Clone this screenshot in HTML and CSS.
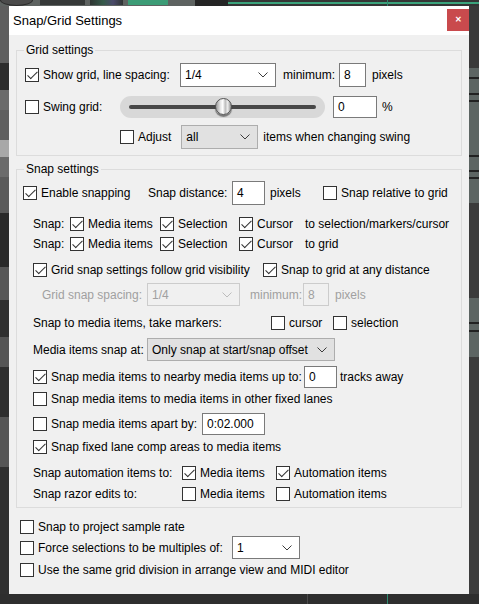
FILE: index.html
```html
<!DOCTYPE html>
<html>
<head>
<meta charset="utf-8">
<title>Snap/Grid Settings</title>
<link rel="stylesheet" href="styles.css">
</head>
<body>
<div class="desk">
  <div class="topbar">
    <span class="tb-left"><span class="knob"></span><span class="tbtn b1"></span><span class="tbtn b2"></span><span class="tbtn b3"></span></span>
    <span class="tb-dark"></span>
    <span class="tb-track"></span>
  </div>

  <div class="side left"></div>

  <div class="dialog">
    <div class="titlebar">
      <span class="title">Snap/Grid Settings</span>
      <span class="close">&#x2715;</span>
    </div>

    <div class="content">
      <fieldset class="group grid-group">
        <legend>Grid settings</legend>

        <div class="row h24 mt6 pl8">
          <label class="chk w155"><span class="cb on"></span>Show grid, line spacing:</label>
          <div class="combo w96 h24"><span>1/4</span><svg class="chev" viewBox="0 0 10 6"><path d="M0.5 0.5 L5 5 L9.5 0.5"/></svg></div>
          <span class="ml7">minimum:</span>
          <div class="edit w27 h24 ml4">8</div>
          <span class="ml6">pixels</span>
        </div>

        <div class="row h22 mt9 pl8">
          <label class="chk w95"><span class="cb"></span>Swing grid:</label>
          <div class="slider">
            <span class="groove"></span>
            <span class="thumb"></span>
          </div>
          <div class="edit w44 h22 ml8">0</div>
          <span class="ml5">%</span>
        </div>

        <div class="row h24 mt7 pl103">
          <label class="chk"><span class="cb"></span>Adjust</label>
          <div class="combo gray w77 h24 ml10"><span>all</span><svg class="chev" viewBox="0 0 10 6"><path d="M0.5 0.5 L5 5 L9.5 0.5"/></svg></div>
          <span class="ml5">items when changing swing</span>
        </div>
      </fieldset>

      <fieldset class="group snap-group">
        <legend>Snap settings</legend>

        <div class="row h24 mt5 pl6">
          <label class="chk w125"><span class="cb on"></span>Enable snapping</label>
          <span class="w84">Snap distance:</span>
          <div class="edit w33 h24">4</div>
          <span class="w53 ml5">pixels</span>
          <label class="chk"><span class="cb"></span>Snap relative to grid</label>
        </div>

        <div class="row h20 mt9 pl16">
          <span class="w37">Snap:</span>
          <label class="chk w90"><span class="cb on"></span>Media items</label>
          <label class="chk w79"><span class="cb on"></span>Selection</label>
          <label class="chk w66"><span class="cb on"></span>Cursor</label>
          <span>to selection/markers/cursor</span>
        </div>

        <div class="row h20 pl16">
          <span class="w37">Snap:</span>
          <label class="chk w90"><span class="cb on"></span>Media items</label>
          <label class="chk w79"><span class="cb on"></span>Selection</label>
          <label class="chk w66"><span class="cb on"></span>Cursor</label>
          <span>to grid</span>
        </div>

        <div class="row h20 mt6 pl16">
          <label class="chk w230"><span class="cb on"></span>Grid snap settings follow grid visibility</label>
          <label class="chk"><span class="cb on"></span>Snap to grid at any distance</label>
        </div>

        <div class="row h23 mt3 pl25 disabled">
          <span class="w105">Grid snap spacing:</span>
          <div class="combo dis w93 h23"><span class="dis-val">1/4</span><svg class="chev" viewBox="0 0 10 6"><path d="M0.5 0.5 L5 5 L9.5 0.5"/></svg></div>
          <span class="w53 ml10">minimum:</span>
          <div class="edit dis w26 h23">8</div>
          <span class="ml6">pixels</span>
        </div>

        <div class="row h20 mt7 pl16">
          <span class="w238">Snap to media items, take markers:</span>
          <label class="chk w62"><span class="cb"></span>cursor</label>
          <label class="chk"><span class="cb"></span>selection</label>
        </div>

        <div class="row h23 mt5 pl16">
          <span class="w114">Media items snap at:</span>
          <div class="combo gray w188 h23"><span>Only snap at start/snap offset</span><svg class="chev" viewBox="0 0 10 6"><path d="M0.5 0.5 L5 5 L9.5 0.5"/></svg></div>
        </div>

        <div class="row h22 mt5 pl16">
          <label class="chk w271"><span class="cb on"></span>Snap media items to nearby media items up to:</label>
          <div class="edit w33 h22">0</div>
          <span class="ml3">tracks away</span>
        </div>

        <div class="row h20 mt1 pl16">
          <label class="chk"><span class="cb"></span>Snap media items to media items in other fixed lanes</label>
        </div>

        <div class="row h22 mt4 pl16">
          <label class="chk w169"><span class="cb"></span>Snap media items apart by:</label>
          <div class="edit w63 h22">0:02.000</div>
        </div>

        <div class="row h20 mt2 pl16">
          <label class="chk"><span class="cb on"></span>Snap fixed lane comp areas to media items</label>
        </div>

        <div class="row h20 mt6 pl16">
          <span class="w149">Snap automation items to:</span>
          <label class="chk w94"><span class="cb on"></span>Media items</label>
          <label class="chk"><span class="cb on"></span>Automation items</label>
        </div>

        <div class="row h20 mt1 pl16">
          <span class="w149">Snap razor edits to:</span>
          <label class="chk w94"><span class="cb"></span>Media items</label>
          <label class="chk"><span class="cb"></span>Automation items</label>
        </div>
      </fieldset>

      <div class="row h19 mt9 pl4">
        <label class="chk"><span class="cb"></span>Snap to project sample rate</label>
      </div>
      <div class="row h23 pl4">
        <label class="chk w212"><span class="cb"></span>Force selections to be multiples of:</label>
        <div class="combo w68 h23"><span>1</span><svg class="chev" viewBox="0 0 10 6"><path d="M0.5 0.5 L5 5 L9.5 0.5"/></svg></div>
      </div>
      <div class="row h20 mt1 pl4">
        <label class="chk"><span class="cb"></span>Use the same grid division in arrange view and MIDI editor</label>
      </div>
    </div>
  </div>

  <div class="side right"></div>

  <div class="bottombar"></div>
</div>
</body>
</html>
```

FILE: styles.css
```css
* {
  box-sizing: border-box;
}

html,
body {
  margin: 0;
  padding: 0;
}

body {
  width: 479px;
  height: 604px;
  overflow: hidden;
  background: #333333;
  font-family: "Liberation Sans", Arial, sans-serif;
  font-size: 12px;
  line-height: 14px;
  color: #000000;
}

/* ---------- backdrop (host application) ---------- */
.desk {
  display: grid;
  grid-template-columns: 9px 460px 10px;
  grid-template-rows: 6px 588px 10px;
  width: 479px;
  height: 604px;
}

.topbar {
  grid-column: 1 / 4;
  display: flex;
  height: 6px;
  overflow: hidden;
}

.tb-left {
  display: flex;
  width: 195px;
  background: #5e6361;
}

.knob {
  width: 33px;
  height: 12px;
  margin-top: -6px;
  border-radius: 50%;
  background: #4b4b4b;
  border: 1px solid #2a2a2a;
}

.tbtn {
  height: 5px;
  margin-left: 7px;
  background: #363938;
}

.tbtn.b1 {
  width: 45px;
}

.tbtn.b2 {
  width: 33px;
  margin-left: 5px;
  background: linear-gradient(90deg, #2f3432 0%, #355a4a 40%, #4a4a6a 70%, #2f3432 100%);
}

.tbtn.b3 {
  width: 40px;
  margin-left: 5px;
  background: #3c9c76;
}

.tb-dark {
  width: 33px;
  background: #252525;
}

.tb-track {
  flex: 1;
  background:
    linear-gradient(90deg, transparent 159px, #2f8a70 159px, #2f8a70 160px, transparent 160px),
    linear-gradient(180deg, #353535 0, #353535 2px, #3ba37c 2px, #3ba37c 4px, #353535 4px);
}

.side.left {
  background: linear-gradient(180deg,
    #5e5e5e 0, #5e5e5e 57px,
    #2c2c2c 57px, #2c2c2c 84px,
    #6b6b6b 84px, #6b6b6b 104px,
    #5f5f5f 104px, #5f5f5f 134px,
    #a8a8a8 134px, #a8a8a8 151px,
    #6b6b6b 151px, #6b6b6b 171px,
    #5a5a5a 171px, #5a5a5a 207px,
    #2a2a2a 207px, #2a2a2a 261px,
    #575757 261px, #575757 294px,
    #303030 294px, #303030 331px,
    #555555 331px, #555555 361px,
    #2e2e2e 361px, #2e2e2e 411px,
    #565656 411px, #565656 461px,
    #303030 461px);
}

.side.right {
  background: linear-gradient(180deg,
    #3a3a3a 0, #3a3a3a 62px,
    #5d6563 62px, #5d6563 71px,
    #222222 71px, #222222 73px,
    #5d6563 73px, #5d6563 87px,
    #222222 87px, #222222 89px,
    #5d6563 89px, #5d6563 94px,
    #222222 94px, #222222 96px,
    #5d6563 96px, #5d6563 149px,
    #222222 149px, #222222 151px,
    #5d6563 151px, #5d6563 164px,
    #222222 164px, #222222 166px,
    #5d6563 166px, #5d6563 171px,
    #222222 171px, #222222 173px,
    #5d6563 173px, #5d6563 197px,
    #3b3b3b 197px, #3b3b3b 292px,
    #5d6563 292px, #5d6563 316px,
    #222222 316px, #222222 318px,
    #5d6563 318px, #5d6563 324px,
    #222222 324px, #222222 326px,
    #5d6563 326px, #5d6563 351px,
    #3c3c3c 351px);
}

.bottombar {
  grid-column: 1 / 4;
  background:
    linear-gradient(90deg, transparent 307px, #4a4a4a 307px, #4a4a4a 308px, transparent 308px,
      transparent 387px, #2f8a70 387px, #2f8a70 388px, transparent 388px),
    #2e2e2e;
}

/* ---------- dialog window ---------- */
.dialog {
  display: flex;
  flex-direction: column;
  background: #f0f0f0;
}

.titlebar {
  display: flex;
  align-items: flex-start;
  height: 29px;
  background: #ffffff;
}

.title {
  padding-left: 4px;
  font-size: 13px;
  line-height: 29px;
}

.close {
  display: flex;
  align-items: center;
  justify-content: center;
  width: 22px;
  height: 22px;
  margin-top: 3px;
  margin-left: auto;
  background: #c94a4d;
  color: #ffffff;
  font-size: 8px;
  font-weight: bold;
}

.content {
  display: flex;
  flex-direction: column;
  padding: 0 7px;
}

.group {
  margin: 8px 0 0;
  padding: 0 0 6px;
  border: 1px solid #dcdcdc;
  min-width: 0;
}

.group legend {
  margin-left: 7px;
  padding: 0 2px;
  line-height: 14px;
}

.snap-group {
  margin-top: 6px;
  padding-bottom: 3px;
}

/* ---------- rows ---------- */
.row {
  display: flex;
  align-items: center;
  white-space: nowrap;
}

.h19 { height: 19px; }
.h20 { height: 20px; }
.h22 { height: 22px; }
.h23 { height: 23px; }
.h24 { height: 24px; }

.mt1 { margin-top: 1px; }
.mt2 { margin-top: 2px; }
.mt3 { margin-top: 3px; }
.mt4 { margin-top: 4px; }
.mt5 { margin-top: 5px; }
.mt6 { margin-top: 6px; }
.mt7 { margin-top: 7px; }
.mt9 { margin-top: 9px; }

.pl4 { padding-left: 4px; }
.pl6 { padding-left: 6px; }
.pl8 { padding-left: 8px; }
.pl16 { padding-left: 16px; }
.pl25 { padding-left: 25px; }
.pl103 { padding-left: 103px; }

.ml3 { margin-left: 3px; }
.ml4 { margin-left: 4px; }
.ml5 { margin-left: 5px; }
.ml6 { margin-left: 6px; }
.ml7 { margin-left: 7px; }
.ml8 { margin-left: 8px; }
.ml10 { margin-left: 10px; }

.w26 { width: 26px; }
.w27 { width: 27px; }
.w33 { width: 33px; }
.w37 { width: 37px; }
.w44 { width: 44px; }
.w53 { width: 53px; }
.w62 { width: 62px; }
.w63 { width: 63px; }
.w66 { width: 66px; }
.w68 { width: 68px; }
.w77 { width: 77px; }
.w79 { width: 79px; }
.w84 { width: 84px; }
.w90 { width: 90px; }
.w93 { width: 93px; }
.w94 { width: 94px; }
.w95 { width: 95px; }
.w96 { width: 96px; }
.w105 { width: 105px; }
.w114 { width: 114px; }
.w125 { width: 125px; }
.w149 { width: 149px; }
.w155 { width: 155px; }
.w169 { width: 169px; }
.w188 { width: 188px; }
.w212 { width: 212px; }
.w230 { width: 230px; }
.w238 { width: 238px; }
.w271 { width: 271px; }

.row > span,
.row > label,
.row > div {
  flex: none;
}

/* ---------- checkbox ---------- */
.chk {
  display: flex;
  align-items: center;
}

.cb {
  display: flex;
  align-items: center;
  justify-content: center;
  flex: none;
  width: 14px;
  height: 14px;
  margin-right: 4px;
  border: 1px solid #333333;
  background: #ffffff;
}

.cb.on::after {
  content: "";
  width: 4px;
  height: 9px;
  margin-top: -3px;
  border-right: 1.3px solid #333333;
  border-bottom: 1.3px solid #333333;
  transform: rotate(45deg);
}

/* ---------- edit / combo ---------- */
.edit {
  display: flex;
  align-items: center;
  padding-left: 4px;
  border: 1px solid #7a7a7a;
  background: #ffffff;
}

.edit.dis {
  border-color: #cccccc;
  background: #f0f0f0;
  color: #a0a0a0;
}

.combo {
  display: flex;
  align-items: center;
  justify-content: space-between;
  padding: 0 7px 0 4px;
  border: 1px solid #7a7a7a;
  background: #ffffff;
}

.combo.gray {
  border-color: #adadad;
  background: #e1e1e1;
}

.combo.dis {
  border-color: #cccccc;
  background: #f0f0f0;
  color: #a0a0a0;
}

.chev {
  width: 10px;
  height: 6px;
  fill: none;
  stroke: #3c3c3c;
  stroke-width: 1;
}

.combo.dis .chev {
  stroke: #bcbcbc;
}

.disabled {
  color: #a0a0a0;
}

/* ---------- slider ---------- */
.slider {
  position: relative;
  display: flex;
  align-items: center;
  width: 205px;
  height: 22px;
  padding: 0 9px;
  border-radius: 11px;
  background: #d8d8d8;
}

.groove {
  flex: 1;
  height: 4px;
  border-radius: 2px;
  background: #474747;
}

.thumb {
  position: absolute;
  left: 95px;
  top: 2px;
  width: 17px;
  height: 17px;
  border-radius: 50%;
  border: 1px solid #555555;
  background: linear-gradient(90deg, #9a9a9a 0%, #e6e6e6 30%, #ffffff 45%, #bdbdbd 62%, #ececec 78%, #8c8c8c 100%);
  box-shadow: 0 2px 1px rgba(0, 0, 0, 0.45);
}
```
